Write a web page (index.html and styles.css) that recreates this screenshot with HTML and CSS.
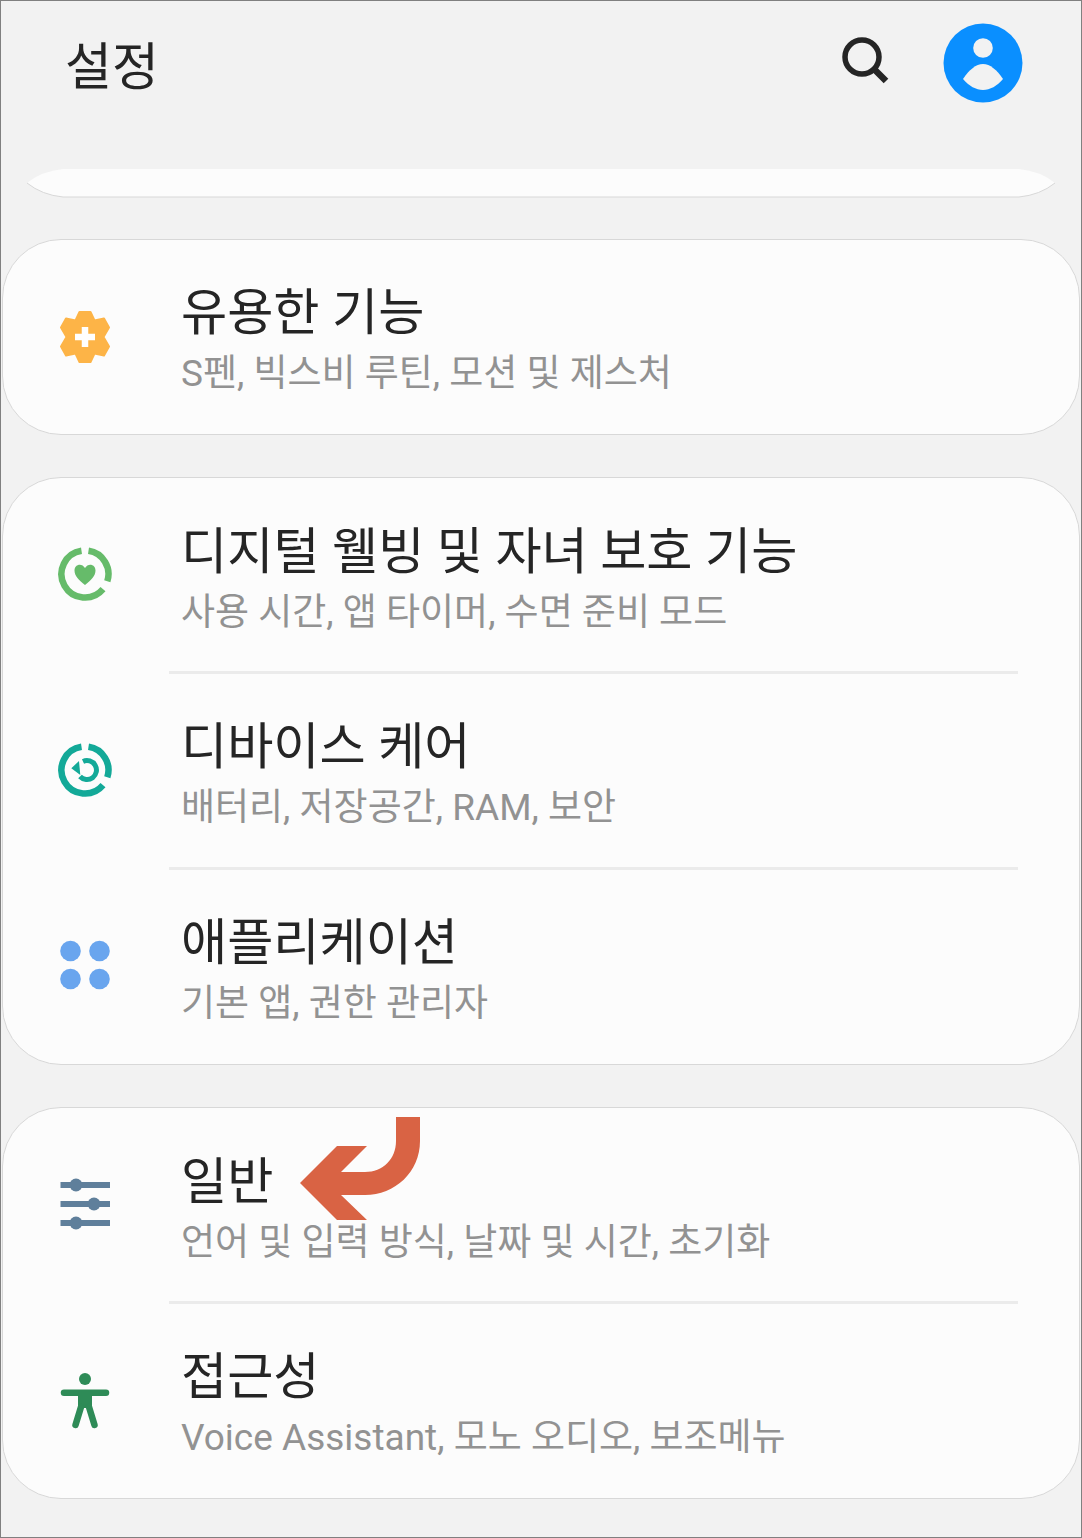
FILE: index.html
```html
<!DOCTYPE html>
<html lang="ko">
<head>
  <meta charset="UTF-8">
  <meta name="viewport" content="width=device-width, initial-scale=1.0">
  <title>설정</title>
  <link rel="stylesheet" href="styles.css">
</head>
<body>
  <div class="screen">

    <!-- Header -->
    <header class="top-bar">
      <h1>설정</h1>
      <svg class="search-icon" viewBox="0 0 52 52">
        <circle cx="22" cy="21" r="17" fill="none" stroke="#252525" stroke-width="5.500"/>
        <path d="M33 32 L46 45" stroke="#252525" stroke-width="6.500"/>
      </svg>
      <svg class="avatar-icon" viewBox="0 0 80 80">
        <circle cx="40" cy="40" r="39.500" fill="#0a8fff"/>
        <circle cx="40" cy="25" r="9.800" fill="#f2f2f2"/>
        <path d="M20 56 C26 47 33 41 40 41 C47 41 54 47 60 56 C54 63 47 67 40 67 C33 67 26 63 20 56 Z" fill="#f2f2f2"/>
      </svg>
    </header>

    <!-- Card scrolled under the header -->
    <svg class="scrolled-card" viewBox="0 0 1030 30">
      <path d="M1 15 Q16 3 37 1 H993 Q1014 3 1029 15 Q1014 27 993 29 H37 Q16 27 1 15 Z" fill="#fcfcfc"/>
      <path d="M1 15 Q16 27 37 29 H993 Q1014 27 1029 15" fill="none" stroke="#d8d8d8" stroke-width="1"/>
    </svg>

    <section class="card">
      <div class="row row-single">
        <svg class="row-icon" viewBox="0 0 60 60">
          <polygon points="24.500,5 35.500,5 39.500,13.500 49,11.500 54,20.500 48.500,30 54,39.500 49,48.500 39.500,46.500 35.500,55 24.500,55 20.500,46.500 11,48.500 6,39.500 11.500,30 6,20.500 11,11.500 20.500,13.500" fill="#fdb447" stroke="#fdb447" stroke-width="2" stroke-linejoin="round"/>
          <path d="M20 30 H40 M30 20 V40" stroke="#fff" stroke-width="6.500"/>
        </svg>
        <div class="row-text">
          <div class="row-title">유용한 기능</div>
          <div class="row-sub">S펜, 빅스비 루틴, 모션 및 제스처</div>
        </div>
      </div>
    </section>

    <section class="card">
      <div class="row">
        <svg class="row-icon raised" viewBox="0 0 60 60">
          <path d="M33.500 6.800 A23.500 23.500 0 0 1 52.300 37.300 M48 45.100 A23.500 23.500 0 1 1 26.500 6.800" fill="none" stroke="#66bb6a" stroke-width="6.500"/>
          <path d="M30 41 C24 36 19.500 32 19.500 26.500 C19.500 20 27 18.500 30 24 C33 18.500 40.500 20 40.500 26.500 C40.500 32 36 36 30 41 Z" fill="#66bb6a"/>
        </svg>
        <div class="row-text">
          <div class="row-title">디지털 웰빙 및 자녀 보호 기능</div>
          <div class="row-sub">사용 시간, 앱 타이머, 수면 준비 모드</div>
        </div>
      </div>
      <div class="row row-wide">
        <svg class="row-icon raised" viewBox="0 0 60 60">
          <path d="M33.500 6.800 A23.500 23.500 0 0 1 52.300 37.300 M48 45.100 A23.500 23.500 0 1 1 26.500 6.800" fill="none" stroke="#13a998" stroke-width="6.500"/>
          <path d="M28 21.400 A9.500 9.500 0 1 1 25 36.500" fill="none" stroke="#13a998" stroke-width="5"/>
          <polygon points="16.300,28.300 24,21 25.300,35" fill="#13a998"/>
        </svg>
        <div class="row-text">
          <div class="row-title">디바이스 케어</div>
          <div class="row-sub">배터리, 저장공간, RAM, 보안</div>
        </div>
      </div>
      <div class="row">
        <svg class="row-icon raised" viewBox="0 0 60 60">
          <circle cx="15.500" cy="16" r="10.300" fill="#69a5ee"/>
          <circle cx="44.500" cy="16" r="10.300" fill="#69a5ee"/>
          <circle cx="15.500" cy="44" r="10.300" fill="#69a5ee"/>
          <circle cx="44.500" cy="44" r="10.300" fill="#69a5ee"/>
        </svg>
        <div class="row-text">
          <div class="row-title">애플리케이션</div>
          <div class="row-sub">기본 앱, 권한 관리자</div>
        </div>
      </div>
    </section>

    <section class="card">
      <div class="row">
        <svg class="row-icon raised" viewBox="0 0 60 60">
          <path d="M5.500 11 H55 M5.500 30 H55 M5.500 49 H55" stroke="#5f7f9b" stroke-width="6"/>
          <circle cx="21" cy="11" r="6.500" fill="#5f7f9b"/>
          <circle cx="39" cy="30" r="6.500" fill="#5f7f9b"/>
          <circle cx="21" cy="49" r="6.500" fill="#5f7f9b"/>
        </svg>
        <div class="row-text">
          <div class="row-title">일반</div>
          <div class="row-sub">언어 및 입력 방식, 날짜 및 시간, 초기화</div>
        </div>
        <svg class="arrow" viewBox="0 0 120 103">
          <path d="M0 66 L37 29 H67 L41 55 H65 C83 55 96 42 96 24 V0 H120 V24 C120 55 95 78 65 78 H41 L67 103 H37 Z" fill="#d96344"/>
        </svg>
      </div>
      <div class="row">
        <svg class="row-icon" viewBox="0 0 60 60">
          <circle cx="30" cy="8" r="6" fill="#2e8b57"/>
          <path d="M9 21.700 H51" stroke="#2e8b57" stroke-width="6.500" stroke-linecap="round"/>
          <path d="M23 20 H37 V37 H23 Z" fill="#2e8b57"/>
          <path d="M26 36 L20.500 54 M34 36 L39.500 54" stroke="#2e8b57" stroke-width="6.500" stroke-linecap="round"/>
        </svg>
        <div class="row-text">
          <div class="row-title">접근성</div>
          <div class="row-sub">Voice Assistant, 모노 오디오, 보조메뉴</div>
        </div>
      </div>
    </section>

  </div>
</body>
</html>
```

FILE: styles.css
```css
body {
  margin: 0;
  font-family: Roboto, "Noto Sans CJK KR", sans-serif;
}

.screen {
  box-sizing: border-box;
  width: 1082px;
  height: 1538px;
  border: 1px solid #808080;
  background-color: #f2f2f2;
  overflow: hidden;
}

.top-bar {
  display: flex;
  align-items: center;
  height: 122px;
  padding: 0 58px 0 64px;
  margin-bottom: 45px;
}

.top-bar h1 {
  flex: 1;
  margin: 2px 0 0;
  font-size: 51px;
  font-weight: 400;
  color: #252525;
}

.search-icon {
  width: 52px;
  height: 52px;
  margin-right: 51px;
}

.avatar-icon {
  width: 80px;
  height: 80px;
  margin-top: 1px;
}

.scrolled-card {
  display: block;
  width: 1030px;
  height: 30px;
  margin: 0 0 41px 25px;
}

.card {
  margin: 0 1px 42px;
  background-color: #fcfcfc;
  border: 1px solid #d8d8d8;
  border-radius: 59px;
}

.row {
  position: relative;
  display: flex;
  align-items: center;
  height: 195px;
  padding-left: 52px;
}

.row-single {
  height: 194px;
}

.row-wide {
  height: 196px;
}

.row + .row::before {
  content: "";
  position: absolute;
  top: -2px;
  left: 166px;
  right: 61px;
  height: 3px;
  background-color: #ebebeb;
}

.row-icon {
  flex: none;
  width: 60px;
  height: 60px;
  margin-right: 66px;
}

.row-icon.raised {
  margin-top: -3px;
}

.row-text {
  margin-top: 4px;
}

.row-title {
  font-size: 50.2px;
  line-height: 62px;
  color: #252525;
}

.row-sub {
  margin-top: 8px;
  font-size: 37px;
  line-height: 44px;
  color: #929292;
}

/* annotation drawn over the first row of the last card */
.arrow {
  position: absolute;
  left: 297px;
  top: 9px;
  width: 120px;
  height: 103px;
}
```
